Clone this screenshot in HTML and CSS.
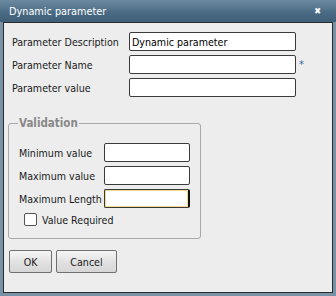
FILE: index.html
```html
<!DOCTYPE html>
<html lang="en">
<head>
    <meta charset="UTF-8">
    <title>Dynamic parameter</title>
    <link rel="stylesheet" href="styles.css">
</head>
<body>
    <div class="window">
        <div class="titlebar">
            <span class="title">Dynamic parameter</span>
            <span class="close">&#10006;</span>
        </div>
        <div class="panel">
            <div class="row">
                <label class="label">Parameter Description</label>
                <input class="field" type="text" value="Dynamic parameter">
            </div>
            <div class="row">
                <label class="label">Parameter Name</label>
                <input class="field" type="text">
                <span class="required">*</span>
            </div>
            <div class="row">
                <label class="label">Parameter value</label>
                <input class="field" type="text">
            </div>

            <fieldset class="validation">
                <legend>Validation</legend>
                <div class="row small">
                    <label class="label">Minimum value</label>
                    <input class="field" type="text">
                </div>
                <div class="row small">
                    <label class="label">Maximum value</label>
                    <input class="field" type="text">
                </div>
                <div class="row small">
                    <label class="label">Maximum Length</label>
                    <input class="field focused" type="text">
                </div>
                <label class="check">
                    <span class="box"></span>
                    Value Required
                </label>
            </fieldset>

            <div class="buttons">
                <button class="ok">OK</button>
                <button class="cancel">Cancel</button>
            </div>
        </div>
    </div>
</body>
</html>
```

FILE: styles.css
```css
body {
    margin: 0;
    font-family: "DejaVu Sans Condensed", "Liberation Sans", Arial, sans-serif;
    font-size: 10.6px;
    color: #1a1a1a;
}
.window {
    width: 336px;
    height: 296px;
    box-sizing: border-box;
    background: #7893a8;
    display: flex;
    flex-direction: column;
}
.titlebar {
    height: 22px;
    flex: none;
    display: flex;
    align-items: center;
    justify-content: space-between;
    padding: 0 15px 0 9px;
    background: linear-gradient(#6b8aa2, #4a6a83 60%, #3f5f79);
    color: white;
}
.title {
    font-size: 10.8px;
    margin-top: 1px;
}
.close {
    font-size: 9px;
    font-weight: bold;
}
.panel {
    flex: 1;
    margin: 0 3px 3px 3px;
    border: 1px solid #2b2b2b;
    background: #ededed;
    padding: 9px 0 0 8px;
}
.row {
    display: flex;
    align-items: center;
    height: 19px;
    margin-bottom: 4px;
}
.label {
    flex: none;
    width: 117px;
    white-space: nowrap;
}
.field {
    width: 167px;
    height: 19px;
    box-sizing: border-box;
    border: 1px solid #3a3a3a;
    border-radius: 2px;
    background: white;
    padding: 0 2px;
    margin: 0;
    font: inherit;
    color: #000;
}
.required {
    color: #3a68b0;
    margin-left: 3px;
    font-size: 11px;
}
.validation {
    margin: 19px 0 0 -4px;
    width: 193px;
    box-sizing: border-box;
    border: 1px solid #a8a8a8;
    border-radius: 3px;
    padding: 13px 0 0 10px;
    height: 123px;
}
.validation legend {
    color: #888;
    font-weight: bold;
    font-size: 11.5px;
    padding: 0 1px;
    margin-left: -1px;
}
.row.small .label {
    width: 85px;
}
.row.small .field {
    width: 86px;
}
.field.focused {
    border-color: #3a3a3a;
    box-shadow: inset 0 0 0 1px #f7d98a;
    border-right: 2px solid #111;
}
.check {
    display: flex;
    align-items: center;
    gap: 5px;
    margin-left: 5px;
    margin-top: 5px;
}
.box {
    width: 13px;
    height: 13px;
    box-sizing: border-box;
    border: 1px solid #555;
    border-radius: 2px;
    background: white;
}
.buttons {
    display: flex;
    gap: 4px;
    margin-top: 11px;
    margin-left: -3px;
}
.buttons button {
    height: 23px;
    border: 1px solid #707070;
    border-radius: 2px;
    background: linear-gradient(#f6f6f6, #e2e2e2 50%, #d6d6d6);
    font: inherit;
    color: #1a1a1a;
    padding: 0;
}
.ok {
    width: 43px;
}
.cancel {
    width: 61px;
}
```
